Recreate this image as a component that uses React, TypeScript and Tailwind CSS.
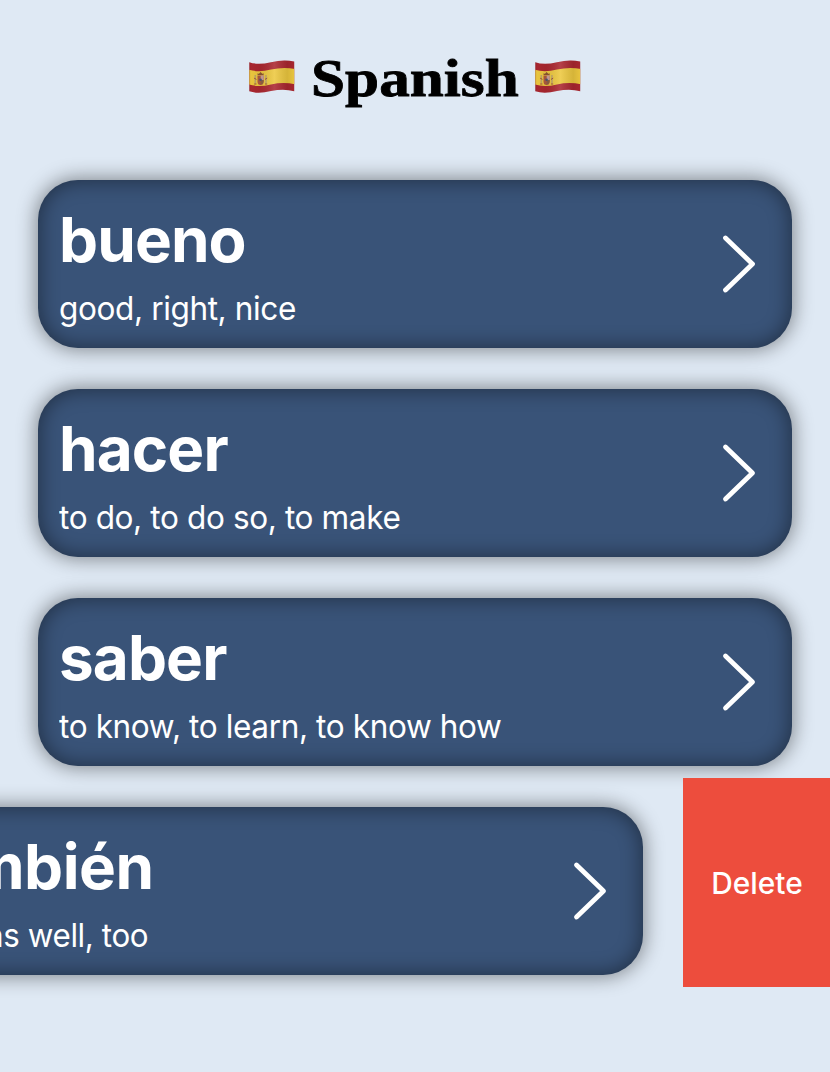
import React from "react";

function Flag({ id }: { id: string }) {
  return (
    <svg width="48" height="36" viewBox="0 0 48 36" className="shrink-0">
      <defs>
        <clipPath id={`${id}-shape`}>
          <path d="M1.3 3.2Q10 6.3 23 3.2Q36 0 46.2 2.6V32.3Q36 29.4 23 32.1Q10 35.3 1.3 32.3Z" />
        </clipPath>
        <linearGradient id={`${id}-shade`} x1="0" x2="1" y1="0" y2="0">
          <stop offset="0" stopColor="#000" stopOpacity="0.22" />
          <stop offset="0.06" stopColor="#000" stopOpacity="0.02" />
          <stop offset="0.25" stopColor="#000" stopOpacity="0.06" />
          <stop offset="0.55" stopColor="#fff" stopOpacity="0.12" />
          <stop offset="0.82" stopColor="#000" stopOpacity="0.1" />
          <stop offset="0.95" stopColor="#000" stopOpacity="0.03" />
          <stop offset="1" stopColor="#000" stopOpacity="0.35" />
        </linearGradient>
      </defs>
      <g clipPath={`url(#${id}-shape)`}>
        <path d="M0 0H48V36H0Z" fill="#ab2730" />
        <path d="M0 10.5Q10 13.9 23 10.6Q36 7.5 48 10.3V25.5Q36 22.8 23 25.4Q10 28.6 0 25.3Z" fill="#edc83f" />
        <path d="M7.3 16V24.5M18 16V24.5" stroke="#c0a565" strokeWidth="1.6" />
        <path d="M6.2 25H8.4M17 25H19.2M6.2 19.2L8.4 20.4M17 20.4L19.2 19.2" stroke="#9d5038" strokeWidth="1" />
        <path d="M9.5 16.6H15.7V22.5Q15.7 26 12.6 26Q9.5 26 9.5 22.5Z" fill="#b0593f" />
        <path d="M12.7 16.6H15.7V21H12.7Z" fill="#c9a098" />
        <path d="M12.7 21H15.7Q15.7 25.2 12.7 25.5Z" fill="#8d6040" />
        <circle cx="12.6" cy="20.7" r="1.3" fill="#4d5575" />
        <path d="M9.7 16.1L9.3 14.4L11 14.8L12.6 13.1L14.3 14.8L15.9 14.4L15.5 16.1Z" fill="#8d5530" />
        <path d="M0 0H48V36H0Z" fill={`url(#${id}-shade)`} />
      </g>
    </svg>
  );
}

function Word({ word, meaning }: { word: string; meaning: string }) {
  const long = word.length > 5;
  return (
    <div className="h-[209px] w-[830px] shrink-0 pt-[29px] pl-[38px]">
      <div className="flex h-[168px] w-[754px] items-center justify-between rounded-[40px] bg-[#395378] pr-[35px] pl-[21px] text-white shadow-[0_0_19px_2px_rgba(0,0,0,0.42),inset_0_0_19px_2px_rgba(0,0,0,0.4)]">
        <div className="flex flex-col items-start pt-[5px]">
          <div
            className={`text-[62px] leading-[72px] font-bold whitespace-nowrap ${long ? "tracking-[-0.5px]" : "tracking-[-0.9px]"}`}
          >
            {word}
          </div>
          <div
            className={`mt-[11px] origin-left text-[33px] leading-[42px] tracking-[-0.4px] whitespace-nowrap ${long ? "scale-x-[0.949]" : "scale-x-[0.956]"}`}
          >
            {meaning}
          </div>
        </div>
        <svg width="36" height="62" viewBox="0 0 36 62" fill="none">
          <path d="M4.5 5L31.5 31L4.5 57" stroke="white" strokeWidth="4.8" strokeLinecap="round" strokeLinejoin="round" />
        </svg>
      </div>
    </div>
  );
}

export default function App() {
  return (
    <main className="h-[1072px] w-[830px] overflow-hidden bg-[#dfe9f4] font-['Inter','Liberation_Sans',sans-serif]">
      <header className="flex h-[151px] items-center justify-center gap-[15px] pt-[3px] pr-[1px]">
        <Flag id="left" />
        <h1 className="flex w-[208px] justify-center pt-[2px] font-['Liberation_Serif',serif] text-[53px] leading-[64px] font-bold text-black">
          <span className="inline-block scale-x-[1.155] [-webkit-text-stroke:0.8px_black]">Spanish</span>
        </h1>
        <Flag id="right" />
      </header>
      <Word word="bueno" meaning="good, right, nice" />
      <Word word="hacer" meaning="to do, to do so, to make" />
      <Word word="saber" meaning="to know, to learn, to know how" />
      <div className="flex w-[979px] -translate-x-[149px]">
        <Word word="también" meaning="also, as well, too" />
        <div className="flex h-[209px] flex-1 pl-[2px]">
          <button className="flex-1 bg-[#ed4d3d] pt-[2px] pl-[1px] text-[29.8px] font-medium text-white">Delete</button>
        </div>
      </div>
    </main>
  );
}
